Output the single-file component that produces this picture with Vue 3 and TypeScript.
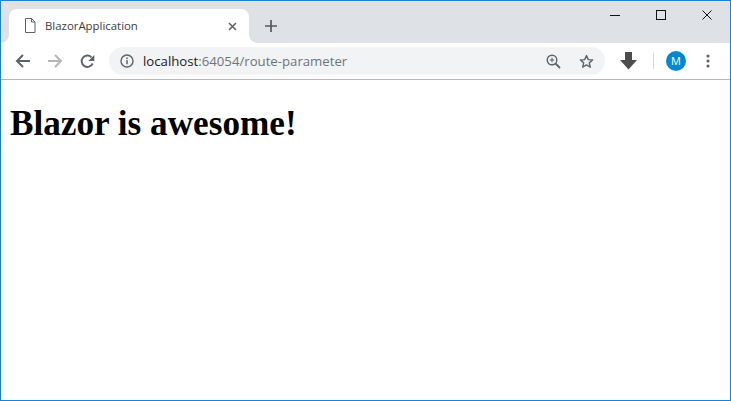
<script setup lang="ts">
const title: string = 'Blazor is awesome!'
</script>

<template>
  <div class="window">
    <div class="tabstrip">
      <div class="tab">
        <svg class="favicon" width="12" height="15" viewBox="0 0 12 15">
          <path d="M1.500.5h6l3.500 3.500v10.500h-9.500z M7.500.5v3.500h3.500" fill="none" stroke="#5f6368" stroke-width="1" />
        </svg>
        <span class="tab-title">BlazorApplication</span>
        <svg class="tab-close" width="9" height="9" viewBox="0 0 9 9">
          <path d="M1 1l7 7M8 1l-7 7" stroke="#5f6368" stroke-width="1.600" fill="none" />
        </svg>
      </div>
      <svg class="newtab" width="12" height="12" viewBox="0 0 12 12">
        <path d="M6 0v12M0 6h12" stroke="#55585c" stroke-width="1.700" fill="none" />
      </svg>
      <div class="wincontrols">
        <svg width="10" height="10" viewBox="0 0 10 10"><path d="M0 5.500h10" stroke="#111" /></svg>
        <svg width="10" height="10" viewBox="0 0 10 10"><rect x=".5" y=".5" width="9" height="9" fill="none" stroke="#111" /></svg>
        <svg width="10" height="10" viewBox="0 0 10 10"><path d="M.5.500l9 9M9.500.500l-9 9" stroke="#111" fill="none" /></svg>
      </div>
    </div>
    <div class="toolbar">
      <svg class="nav first" width="16" height="14" viewBox="0 0 16 14">
        <path d="M15 7H2M8 1L2 7l6 6" fill="none" stroke="#5f6368" stroke-width="2" />
      </svg>
      <svg class="nav" width="16" height="14" viewBox="0 0 16 14">
        <path d="M1 7h13M8 1l6 6-6 6" fill="none" stroke="#b4b6b8" stroke-width="2" />
      </svg>
      <svg class="nav reload" width="15" height="15" viewBox="0 0 15 15">
        <path d="M12.600 9.500A5.700 5.700 0 1 1 11.500 3.300" fill="none" stroke="#5f6368" stroke-width="1.900" />
        <path d="M14.300 1v6h-6z" fill="#5f6368" />
      </svg>
      <div class="omnibox">
        <svg class="info" width="14" height="14" viewBox="0 0 14 14">
          <circle cx="7" cy="7" r="6" fill="none" stroke="#5f6368" stroke-width="1.400" />
          <path d="M7 6v4.200M7 3.500v1.400" stroke="#5f6368" stroke-width="1.500" fill="none" />
        </svg>
        <span class="url"><span class="host">localhost</span>:64054/route-parameter</span>
        <svg class="zoom" width="15" height="15" viewBox="0 0 15 15">
          <circle cx="6" cy="6" r="4.800" fill="none" stroke="#5f6368" stroke-width="1.400" />
          <path d="M9.500 9.500l4.500 4.500" stroke="#5f6368" stroke-width="1.800" fill="none" />
          <path d="M6 3.700v4.600M3.700 6h4.600" stroke="#5f6368" stroke-width="1.100" fill="none" />
        </svg>
        <svg class="star" width="15" height="15" viewBox="0 0 15 15">
          <path d="M7.500 1.600l1.800 4 4.300.4-3.300 2.900 1 4.300-3.800-2.300-3.800 2.300 1-4.300L1.400 6l4.300-.4z" fill="none" stroke="#5f6368" stroke-width="1.400" stroke-linejoin="round" />
        </svg>
      </div>
      <svg class="download" width="17" height="18" viewBox="0 0 17 18">
        <path d="M5 0h7v8h5l-8.500 9.500L0 8h5z" fill="#4d4d4d" />
      </svg>
      <div class="sep"></div>
      <div class="avatar">M</div>
      <svg class="menu" width="4" height="14" viewBox="0 0 4 14">
        <circle cx="2" cy="2" r="1.600" fill="#5f6368" />
        <circle cx="2" cy="7" r="1.600" fill="#5f6368" />
        <circle cx="2" cy="12" r="1.600" fill="#5f6368" />
      </svg>
    </div>
    <main class="page">
      <h1>{{ title }}</h1>
    </main>
  </div>
</template>

<style>
html, body { margin: 0; background: #fff; }
</style>

<style scoped>
.window {
  box-sizing: border-box;
  width: 731px;
  height: 401px;
  border: 1px solid #1683d8;
  display: flex;
  flex-direction: column;
  overflow: hidden;
  background: #fff;
}
.tabstrip {
  height: 42px;
  flex: none;
  background: #dee1e6;
  display: flex;
  align-items: flex-end;
}
.tab {
  width: 240px;
  height: 34px;
  margin-left: 8px;
  background: #fff;
  border-radius: 8px 8px 0 0;
  display: flex;
  align-items: center;
  position: relative;
  padding: 0 12px 0 15px;
  box-sizing: border-box;
}
.tab::before, .tab::after {
  content: '';
  position: absolute;
  bottom: 0;
  width: 8px;
  height: 8px;
}
.tab::before { left: -8px; background: radial-gradient(circle at 0 0, transparent 7.500px, #fff 8px); }
.tab::after { right: -8px; background: radial-gradient(circle at 100% 0, transparent 7.500px, #fff 8px); }
.favicon { flex: none; margin-top: -1px; }
.tab-title {
  font: 11.4px "Open Sans", "Noto Sans", sans-serif;
  color: #3c4043;
  margin: -1px 0 0 9px;
  flex: 1;
  white-space: nowrap;
}
.tab-close { flex: none; }
.newtab { flex: none; margin: 0 0 11px 16px; }
.wincontrols {
  margin-left: auto;
  align-self: flex-start;
  display: flex;
  gap: 36px;
  padding: 9px 18px 0 0;
}
.wincontrols svg { display: block; }
.toolbar {
  height: 36px;
  flex: none;
  background: #fff;
  border-bottom: 1px solid #b6b6b6;
  display: flex;
  align-items: center;
}
.nav { flex: none; }
.first { margin-left: 14px; }
.nav + .nav { margin-left: 16px; }
.nav + .reload { margin-left: 17px; }
.omnibox {
  flex: none;
  width: 496px;
  height: 28px;
  margin-left: 14px;
  background: #f1f3f4;
  border-radius: 14px;
  display: flex;
  align-items: center;
  box-sizing: border-box;
  padding-left: 11px;
}
.info { flex: none; }
.url {
  font: 13.2px "Open Sans", "Noto Sans", sans-serif;
  color: #6f7479;
  margin-left: 9px;
  flex: 1;
  white-space: nowrap;
}
.host { color: #202124; }
.zoom { flex: none; }
.star { flex: none; margin: 0 11px 0 18px; }
.download { flex: none; margin-left: 15px; }
.sep { flex: none; width: 1px; height: 16px; background: #d5d7da; margin-left: 16px; }
.avatar {
  flex: none;
  width: 20px;
  height: 20px;
  border-radius: 50%;
  margin-left: 12px;
  background: #0288d1;
  color: #fff;
  font: 11px/20px "Open Sans", sans-serif;
  text-align: center;
}
.menu { flex: none; margin-left: 20px; }
.page { flex: 1; background: #fff; }
h1 {
  margin: 24px 0 0 9px;
  font: bold 35.2px "Liberation Serif", serif;
  color: #000;
}
</style>
